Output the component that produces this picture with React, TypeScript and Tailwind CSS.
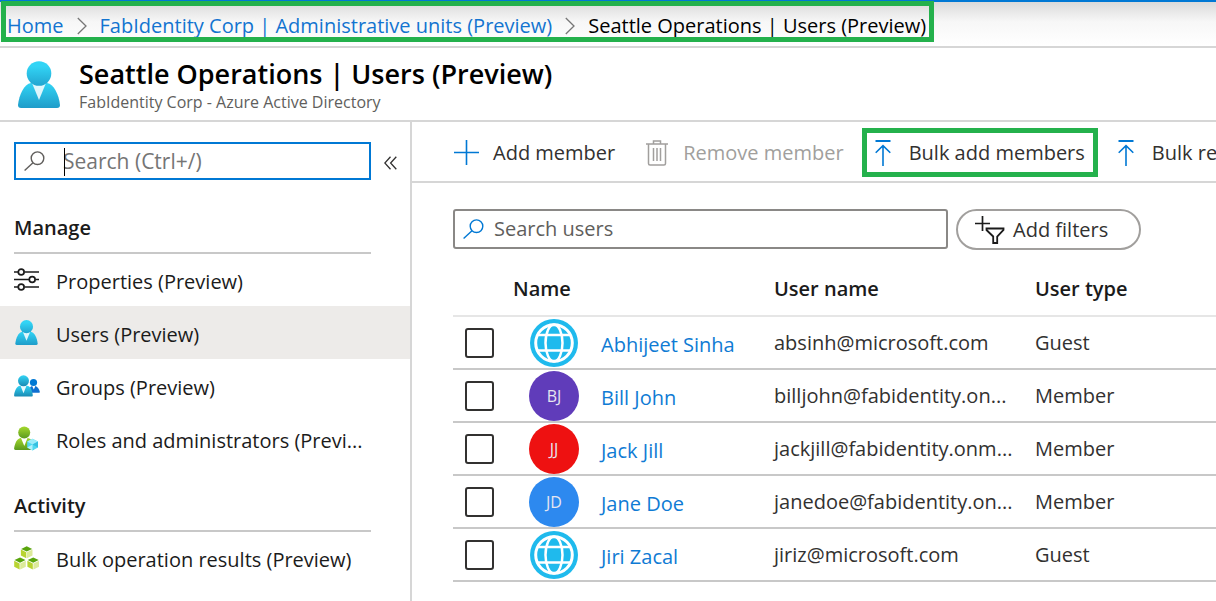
import React from "react";

type User = { name: string; userName: string; type: string; initials?: string; color?: string };

const users: User[] = [
  { name: "Abhijeet Sinha", userName: "absinh@microsoft.com", type: "Guest" },
  { name: "Bill John", userName: "billjohn@fabidentity.on...", type: "Member", initials: "BJ", color: "bg-[#603cba]" },
  { name: "Jack Jill", userName: "jackjill@fabidentity.onm...", type: "Member", initials: "JJ", color: "bg-[#ee1111]" },
  { name: "Jane Doe", userName: "janedoe@fabidentity.on...", type: "Member", initials: "JD", color: "bg-[#2d89ef]" },
  { name: "Jiri Zacal", userName: "jiriz@microsoft.com", type: "Guest" },
];

function Chevron() {
  return (
    <svg width="10" height="18" viewBox="0 0 10 18" fill="none" stroke="#777" strokeWidth="1.3" aria-hidden="true">
      <path d="M.8 1 9 9 .8 17" />
    </svg>
  );
}

function PersonIcon({ className, id }: { className: string; id: string }) {
  return (
    <svg className={className} viewBox="0 0 42 47" aria-hidden="true">
      <defs>
        <linearGradient id={id} x1="0" y1="0" x2="0" y2="1">
          <stop offset="0" stopColor="#32d4f5" />
          <stop offset="1" stopColor="#1f9cc9" />
        </linearGradient>
        <linearGradient id={id + "-head"} x1="0" y1="0" x2="0" y2="1">
          <stop offset="0.2" stopColor="#32d4f5" />
          <stop offset="1" stopColor="#22a5d0" />
        </linearGradient>
      </defs>
      <path d="M3 47a3 3 0 0 1-3-3C1 34 6 23 13 22h16c7 1 12 12 13 22a3 3 0 0 1-3 3z" fill={"url(#" + id + ")"} />
      <path d="M14 22h14l-7 17z" fill="#fff" opacity=".85" />
      <circle cx="21" cy="12.5" r="12.3" fill={"url(#" + id + "-head)"} />
    </svg>
  );
}

function GroupIcon() {
  return (
    <svg width="26" height="22" viewBox="0 0 26 22" aria-hidden="true">
      <defs>
        <linearGradient id="group-front" x1="0" y1="0" x2="0" y2="1">
          <stop offset="0" stopColor="#32d4f5" />
          <stop offset="1" stopColor="#198ab3" />
        </linearGradient>
      </defs>
      <path d="M15 17.500c0-4 1-6 3-6.500h3.500c2.500 1 3.800 3.500 4.300 5.800.1.600-.3 1-1 1H16z" fill="#0f6fd0" />
      <path d="M18 10.800h3.500l-1.700 3.700z" fill="#fff" />
      <circle cx="19.500" cy="7.500" r="3.600" fill="#0078d4" />
      <path d="M1.300 21.500c-.8 0-1.300-.5-1.200-1.300.5-4.500 2.500-9 6-9.500h7c3.500.5 5.300 5 5.700 9.500 0 .8-.5 1.300-1.200 1.300z" fill="url(#group-front)" />
      <path d="M6.500 10.700h6l-3 7.500z" fill="#fff" opacity=".9" />
      <circle cx="9.500" cy="5.800" r="5.500" fill="url(#group-front)" />
    </svg>
  );
}

function RolesIcon() {
  return (
    <svg width="25" height="25" viewBox="0 0 25 25" aria-hidden="true">
      <defs>
        <linearGradient id="roles" x1="0" y1="0" x2="0" y2="1">
          <stop offset="0" stopColor="#a4d82c" />
          <stop offset="1" stopColor="#5a9a1e" />
        </linearGradient>
      </defs>
      <path d="M1.500 24C.6 24 0 23.400.1 22.600.7 17.500 3 12.600 6.500 12h7.500c3.500.6 5.500 5 6 10.500 0 1-.4 1.500-1.400 1.500z" fill="url(#roles)" />
      <path d="M7 12h6.500l-3.200 8z" fill="#fff" />
      <circle cx="10.200" cy="6.600" r="6" fill="url(#roles)" />
      <path d="M18.500 12.800 24 15.500v6L18.500 24.500 13.200 21.500v-6z" fill="#50d8f0" />
      <path d="M18.500 12.800 24 15.500 18.500 18.400 13.200 15.500z" fill="#9cecf9" />
      <path d="M13.200 21.500 18.500 18.400v6.100z" fill="#b3f0fb" />
      <path d="M24 15.500v6l-5.500-3.100z" fill="#35bfe0" />
    </svg>
  );
}

function SlidersIcon() {
  return (
    <svg width="25" height="23" viewBox="0 0 25 23" fill="none" stroke="#1b1b1b" strokeWidth="1.700" aria-hidden="true">
      <path d="M0 4h4M10.500 4H25M0 11.500h15M21.500 11.500H25M0 19h4M10.500 19H25" />
      <circle cx="7.200" cy="4" r="2.900" />
      <circle cx="18.200" cy="11.500" r="2.900" />
      <circle cx="7.200" cy="19" r="2.900" />
    </svg>
  );
}

function Cube({ x, y }: { x: number; y: number }) {
  return (
    <g transform={"translate(" + x + " " + y + ")"}>
      <path d="M6 .2 11.500 2.900 6 5.600.500 2.900z" fill="#59a50c" />
      <path d="M.2 3.600 5.600 6.200v6L.2 9.600z" fill="#b8d432" />
      <path d="M11.800 3.600 6.200 6.200v6l5.600-2.600z" fill="#dcea9a" />
    </g>
  );
}

function CubesIcon() {
  return (
    <svg width="26" height="24" viewBox="0 0 26 24" aria-hidden="true">
      <Cube x={6.7} y={0} />
      <Cube x={0} y={11.2} />
      <Cube x={13.2} y={11.2} />
    </svg>
  );
}

function SearchIcon({ className }: { className: string }) {
  return (
    <svg className={className} width="21" height="20" viewBox="0 0 21 20" fill="none" stroke="currentColor" strokeWidth="1.400" aria-hidden="true">
      <circle cx="13.500" cy="7.200" r="6.300" />
      <path d="M9 11.700.600 19.500" />
    </svg>
  );
}

function UploadIcon() {
  return (
    <svg width="16" height="26" viewBox="0 0 16 26" fill="none" stroke="#0078d4" aria-hidden="true">
      <path d="M.5 1h15" strokeWidth="2" />
      <path d="M8 6v20M.7 12.800 8 5.700l7.300 7.100" strokeWidth="1.600" />
    </svg>
  );
}

function TrashIcon() {
  return (
    <svg width="22" height="26" viewBox="0 0 22 26" fill="none" stroke="#a19f9d" strokeWidth="1.500" aria-hidden="true">
      <path d="M0 4h22M7.500 4V1h7v3M2.500 4v19.500q0 1.500 1.500 1.500h14q1.500 0 1.500-1.500V4M7.500 8v13M11 8v13M14.500 8v13" />
    </svg>
  );
}

function FilterIcon() {
  return (
    <svg width="30" height="28" viewBox="0 0 30 28" fill="none" stroke="#1b1b1b" aria-hidden="true">
      <path d="M0 7.500h15M7.500 0v15" strokeWidth="1.700" />
      <path d="M11.500 12.500h17v1.500l-6.300 6.500V27h-4v-6.500L11.500 14z" strokeWidth="1.800" />
    </svg>
  );
}

function GlobeIcon() {
  return (
    <svg width="48" height="48" viewBox="0 0 48 48" fill="none" aria-hidden="true">
      <circle cx="24" cy="24" r="24" fill="#1fbaed" />
      <circle cx="24" cy="24" r="18.300" stroke="#fff" strokeWidth="3" />
      <ellipse cx="24" cy="24" rx="8.500" ry="18.500" stroke="#fff" strokeWidth="2.500" />
      <path d="M8 16h32M8 31.500h32" stroke="#fff" strokeWidth="2.500" />
    </svg>
  );
}

function NavItem({ icon, label, active }: { icon: React.ReactNode; label: string; active?: boolean }) {
  return (
    <li>
      <a
        href="#"
        aria-current={active ? "page" : undefined}
        className={"flex h-[53px] items-center gap-[14px] pl-[14px] text-[#1b1b1b] " + (active ? "bg-[#edebe9]" : "")}
      >
        <span className="flex w-7 shrink-0 items-center">{icon}</span>
        <span className="pt-1 whitespace-nowrap">{label}</span>
      </a>
    </li>
  );
}

export default function App() {
  return (
    <div className="flex min-h-screen flex-col overflow-hidden bg-white font-['Open_Sans',sans-serif] text-[20px] leading-7 text-[#323130]">
      <div className="border-t-2 border-b-2 border-t-[#0078d4] border-b-[#d6d6d6] bg-linear-to-b from-[#dadada] via-[#f7f7f7] via-45% to-white">
        <nav aria-label="Breadcrumb" className="relative flex h-11 w-fit items-center pt-[3px] pr-2 pl-[7px] whitespace-nowrap">
          <ol className="flex items-center gap-[13px]">
            <li><a href="#" className="text-[#1374d0]">Home</a></li>
            <li><Chevron /></li>
            <li><a href="#" className="text-[#1374d0]">FabIdentity Corp | Administrative units (Preview)</a></li>
            <li><Chevron /></li>
            <li className="text-black" aria-current="page">Seattle Operations | Users (Preview)</li>
          </ol>
          <div className="pointer-events-none absolute -top-px right-0 bottom-1 left-px border-5 border-[#24b14c]" />
        </nav>
      </div>

      <header className="flex h-[74px] items-center gap-[19px] border-b-2 border-[#d6d6d6] pl-[18px]">
        <PersonIcon id="person-large" className="h-[47px] w-[42px]" />
        <div>
          <h1 className="text-[27px] leading-9 font-semibold text-black">Seattle Operations | Users (Preview)</h1>
          <p className="text-[16px] leading-5 text-[#605e5c]">FabIdentity Corp - Azure Active Directory</p>
        </div>
      </header>

      <div className="flex flex-1">
        <aside className="w-[412px] shrink-0 border-r-2 border-[#d6d6d6] pt-5">
          <div className="flex items-center gap-[13px] pl-[14px]">
            <label className="relative flex h-[38px] w-[357px] items-center border-2 border-[#0078d4] pl-2">
              <SearchIcon className="shrink-0 text-[#605e5c]" />
              <input type="text" aria-label="Search menu" placeholder="Search (Ctrl+/)" className="ml-[18px] w-full bg-transparent text-[21px] outline-none placeholder:text-[#757575]" />
              <span className="absolute top-1 left-12 h-7 w-px bg-black" />
            </label>
            <button type="button" aria-label="Collapse menu" className="mt-1">
              <svg width="13" height="14" viewBox="0 0 13 14" fill="none" stroke="#323130" strokeWidth="1.300" aria-hidden="true">
                <path d="M6.500.700.800 7l5.700 6.300M12.300.700 6.600 7l5.700 6.300" />
              </svg>
            </button>
          </div>

          <h2 className="mt-8 mr-[39px] ml-[14px] h-[42px] border-b-2 border-[#c8c8c8] leading-8 font-semibold text-[#1b1b1b]">Manage</h2>
          <ul className="-mt-px">
            <NavItem icon={<SlidersIcon />} label="Properties (Preview)" />
            <NavItem icon={<PersonIcon id="person-small" className="ml-px h-[25px] w-[23px]" />} label="Users (Preview)" active />
            <NavItem icon={<GroupIcon />} label="Groups (Preview)" />
            <NavItem icon={<RolesIcon />} label="Roles and administrators (Previ..." />
          </ul>
          <h2 className="mt-[25px] mr-[39px] ml-[14px] h-[42px] border-b-2 border-[#c8c8c8] leading-8 font-semibold text-[#1b1b1b]">Activity</h2>
          <ul className="-mt-px">
            <NavItem icon={<CubesIcon />} label="Bulk operation results (Preview)" />
          </ul>
        </aside>

        <main className="min-w-0 flex-1 overflow-hidden">
          <div role="toolbar" aria-label="User commands" className="flex h-[61px] items-center overflow-hidden border-b-2 border-[#d6d6d6] pt-[2px] pl-[42px] whitespace-nowrap">
            <button type="button" className="flex shrink-0 items-center gap-[14px]">
              <svg width="25" height="25" viewBox="0 0 25 25" stroke="#0078d4" strokeWidth="1.600" aria-hidden="true">
                <path d="M0 12.500h25M12.500 0v25" />
              </svg>
              Add member
            </button>
            <button type="button" disabled className="ml-[31px] flex shrink-0 items-center gap-[15px] text-[#a19f9d]">
              <TrashIcon />
              Remove member
            </button>
            <button type="button" className="ml-[18px] flex h-[49px] shrink-0 items-center gap-[18px] border-5 border-[#24b14c] px-2">
              <UploadIcon />
              Bulk add members
            </button>
            <button type="button" className="ml-5 flex shrink-0 items-center gap-[18px]">
              <UploadIcon />
              Bulk remove members
            </button>
          </div>

          <div className="flex items-start gap-2 pt-[26px] pl-[41px]">
            <label className="flex h-10 w-[495px] items-center rounded-[3px] border-2 border-[#8a8886] pl-2 text-[#0078d4]">
              <SearchIcon className="shrink-0" />
              <input type="text" aria-label="Search users" placeholder="Search users" className="ml-[10px] w-full bg-transparent text-[#323130] outline-none placeholder:text-[#605e5c]" />
            </label>
            <button type="button" className="flex h-[41px] w-[185px] items-center gap-2 rounded-full border-2 border-[#a19f9d] pl-[17px]">
              <FilterIcon />
              Add filters
            </button>
          </div>

          <div className="pl-[41px]">
            <table className="w-full table-fixed border-separate border-spacing-0 text-left">
              <colgroup>
                <col className="w-[60px]" />
                <col className="w-[261px]" />
                <col className="w-[261px]" />
                <col />
              </colgroup>
              <thead>
                <tr className="h-[67px] text-[#1b1b1b]">
                  <th className="border-b-2 border-[#e6e6e6]" />
                  <th className="border-b-2 border-[#e6e6e6] pt-3 font-semibold">Name</th>
                  <th className="border-b-2 border-[#e6e6e6] pt-3 font-semibold">User name</th>
                  <th className="border-b-2 border-[#e6e6e6] pt-3 font-semibold">User type</th>
                </tr>
              </thead>
              <tbody>
                {users.map((u) => (
                  <tr key={u.name} className="h-[53px]">
                    <td className="border-b-2 border-[#c8c8c8] p-0 pl-3">
                      <input type="checkbox" aria-label={"Select " + u.name} className="block h-[30px] w-[29px] appearance-none rounded-[3px] border-2 border-[#323130]" />
                    </td>
                    <td className="border-b-2 border-[#c8c8c8] p-0 pl-4">
                      <div className="flex items-center gap-[22px]">
                        {u.initials ? (
                          <span className={"flex size-[50px] shrink-0 items-center justify-center rounded-full text-[16px] leading-5 text-[#e6e6f0] " + u.color}>{u.initials}</span>
                        ) : (
                          <span className="flex size-[50px] shrink-0 items-center justify-center"><GlobeIcon /></span>
                        )}
                        <a href="#" className="pt-1 whitespace-nowrap text-[#0f7bd4]">{u.name}</a>
                      </div>
                    </td>
                    <td className="border-b-2 border-[#c8c8c8] p-0 pt-px whitespace-nowrap">{u.userName}</td>
                    <td className="border-b-2 border-[#c8c8c8] p-0 pt-px">{u.type}</td>
                  </tr>
                ))}
              </tbody>
            </table>
          </div>
        </main>
      </div>
    </div>
  );
}
